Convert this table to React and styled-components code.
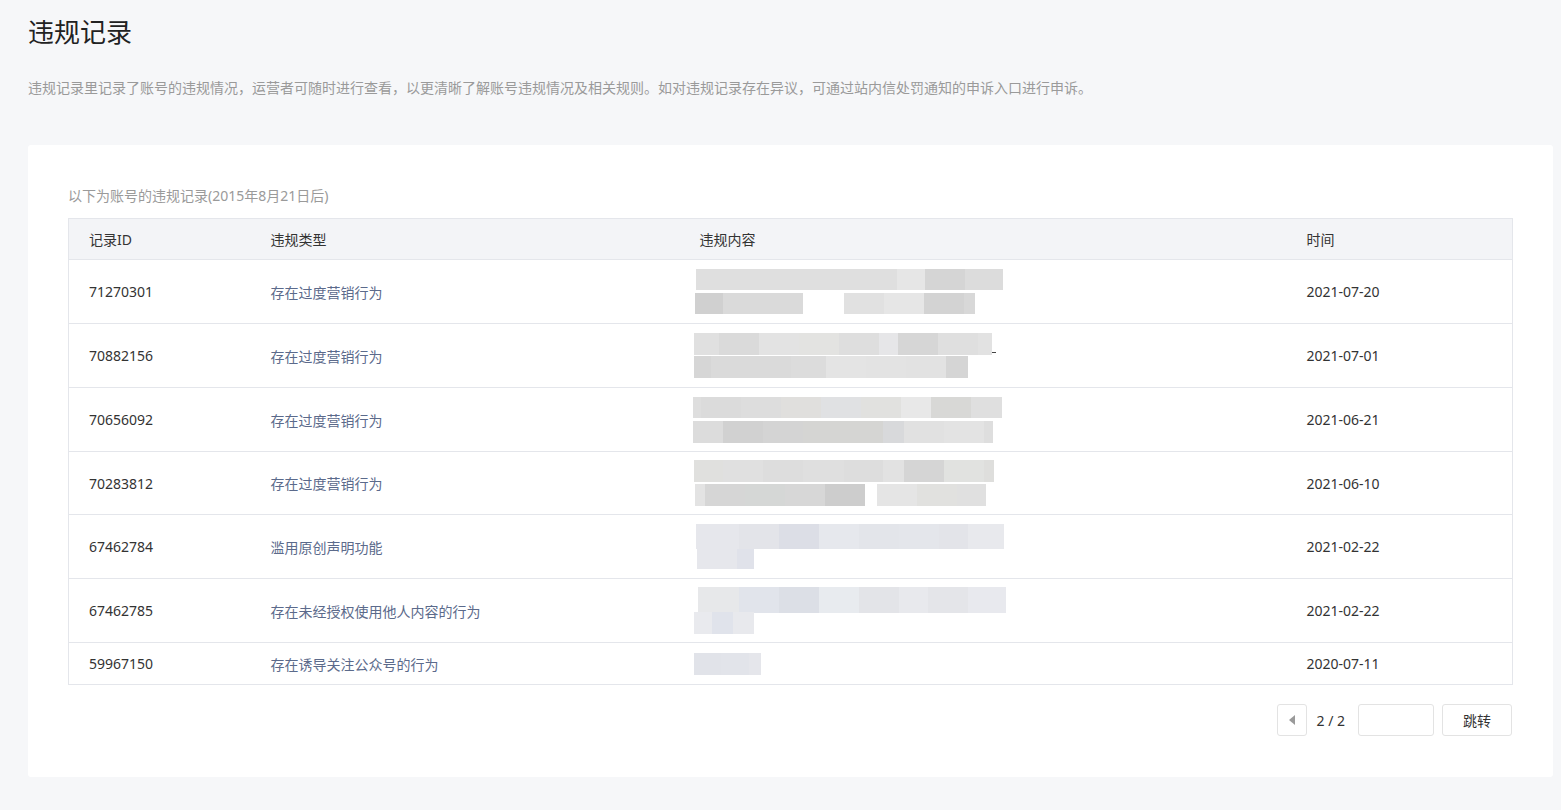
import React from 'react';
import styled, { createGlobalStyle } from 'styled-components';

/********** Global **********/
const GlobalStyle = createGlobalStyle`
  html, body {
    margin: 0;
    padding: 0;
    background: #f6f7f9;
  }
  body {
    font-family: "Noto Sans", "Noto Sans CJK SC", sans-serif;
    color: #333;
  }
`

/********** Styling **********/
const Page = styled.div`
  padding: 14px 8px 34px 28px;
  min-height: 761px;
  box-sizing: border-box;
`
const Title = styled.h2`
  margin: 0;
  font-size: 26px;
  line-height: 36px;
  font-weight: 400;
  color: #222;
`
const Desc = styled.p`
  margin: 28px 0 0;
  font-size: 14px;
  line-height: 20px;
  color: #9a9a9a;
`
const Card = styled.div`
  margin-top: 47px;
  background: #fff;
  border-radius: 3px;
  padding: 41px 40px 41px 40px;
`
const Caption = styled.div`
  font-size: 14px;
  line-height: 20px;
  color: #9a9a9a;
`
const Table = styled.table`
  margin-top: 12px;
  width: 100%;
  table-layout: fixed;
  border-collapse: collapse;
  border: 1px solid #e4e6eb;
  font-size: 14px;
`
const HeadRow = styled.tr`
  height: 41px;
  background: #f3f4f7;
  border-bottom: 1px solid #e4e6eb;
`
const Th = styled.th`
  text-align: left;
  font-weight: 400;
  color: #333;
  padding: 0 0 0 20px;
`
const Row = styled.tr`
  height: ${({ $h }) => $h}px;
  border-bottom: 1px solid #e4e6eb;
`
const Td = styled.td`
  padding: 0 0 0 ${({ $pl }) => ($pl ?? 20)}px;
  vertical-align: middle;
  color: ${({ $type }) => ($type ? '#5b6a8b' : '#333')};
`
const Mosaic = styled.div`
  display: flex;
  flex-direction: column;
`
const MosaicLine = styled.div`
  display: flex;
  align-items: flex-end;
  height: ${({ $h }) => $h}px;
  margin-left: ${({ $x }) => $x}px;
  margin-top: ${({ $gap }) => $gap}px;
`
const Block = styled.span`
  display: block;
  width: ${({ $w }) => $w}px;
  height: 100%;
  background: ${({ $c }) => $c};
`
const Dash = styled.span`
  display: block;
  width: 4px;
  height: 1px;
  margin-bottom: 2px;
  background: #444;
`
const Pager = styled.div`
  display: flex;
  justify-content: flex-end;
  align-items: center;
  margin-top: 19px;
  padding-right: 1px;
`
const PrevBtn = styled.button`
  width: 30px;
  height: 32px;
  border: 1px solid #e3e3e3;
  border-radius: 3px;
  background: #fff;
  display: flex;
  align-items: center;
  justify-content: center;
  padding: 0;
`
const Arrow = styled.span`
  width: 0;
  height: 0;
  border-top: 5px solid transparent;
  border-bottom: 5px solid transparent;
  border-right: 6px solid #9a9a9a;
`
const PageText = styled.span`
  margin: 0 13px 0 9px;
  font-size: 14px;
  color: #333;
`
const JumpInput = styled.input`
  width: 76px;
  height: 32px;
  box-sizing: border-box;
  border: 1px solid #e3e3e3;
  border-radius: 3px;
  outline: none;
`
const JumpBtn = styled.button`
  margin-left: 8px;
  width: 70px;
  height: 32px;
  border: 1px solid #e3e3e3;
  border-radius: 3px;
  background: #fff;
  font-family: "Noto Sans CJK SC", sans-serif;
  font-size: 14px;
  color: #333;
`

/********** Data **********/
const G = 'transparent';
const records = [
  {
    id: '71270301', type: '存在过度营销行为', time: '2021-07-20', h: 64,
    lines: [
      { x: 16, h: 21, gap: 0, b: [[201, '#dfdfdf'], [28, '#e6e6e6'], [40, '#d5d5d5'], [38, '#dcdcdc']] },
      { x: 15, h: 21, gap: 3, b: [[28, '#d0d0d0'], [80, '#dadada'], [41, G], [40, '#e1e1e1'], [40, '#e6e6e6'], [40, '#d3d3d3'], [11, '#d8d8d8']] },
    ],
  },
  {
    id: '70882156', type: '存在过度营销行为', time: '2021-07-01', h: 64,
    lines: [
      { x: 14, h: 22, gap: 0, dash: true, b: [[25, '#e0e0e0'], [40, '#dadada'], [40, '#e3e3e3'], [40, '#e3e3e1'], [40, '#dedede'], [19, '#e6e6e8'], [40, '#d6d6d6'], [40, '#dfdfdf'], [14, '#e2e2e2']] },
      { x: 14, h: 22, gap: 1, b: [[17, '#d6d6d6'], [80, '#dadada'], [35, '#dcdcdc'], [40, '#e4e4e4'], [40, '#e3e3e3'], [40, '#e2e2e2'], [22, '#d5d5d5']] },
    ],
  },
  {
    id: '70656092', type: '存在过度营销行为', time: '2021-06-21', h: 64,
    lines: [
      { x: 13, h: 21, gap: 0, b: [[8, '#dedede'], [40, '#dbdbdb'], [40, '#dddddd'], [40, '#e0dfdd'], [40, '#e0e1e3'], [40, '#e1e1df'], [30, '#e8e8e8'], [40, '#d8d8d6'], [31, '#dfdfdf']] },
      { x: 13, h: 22, gap: 3, b: [[30, '#dcdcdc'], [40, '#d1d1d1'], [40, '#d4d4d4'], [80, '#d5d5d3'], [21, '#d8d9db'], [40, '#e1e1e1'], [40, '#e3e3e3'], [9, '#dedede']] },
    ],
  },
  {
    id: '70283812', type: '存在过度营销行为', time: '2021-06-10', h: 63,
    lines: [
      { x: 14, h: 22, gap: 0, b: [[29, '#e0e0de'], [40, '#e0e0e0'], [40, '#dddddd'], [41, '#dfdfdf'], [39, '#dddddd'], [21, '#e2e2e2'], [40, '#d5d5d5'], [40, '#e1e2e0'], [10, '#dededc']] },
      { x: 15, h: 22, gap: 2, b: [[10, '#e3e3e3'], [40, '#d6d6d6'], [40, '#d5d7d6'], [40, '#d7d7d7'], [40, '#cdcdcd'], [12, G], [40, '#e5e5e5'], [40, '#e1e1df'], [29, '#e0e0e0']] },
    ],
  },
  {
    id: '67462784', type: '滥用原创声明功能', time: '2021-02-22', h: 64,
    lines: [
      { x: 16, h: 25, gap: 0, b: [[43, '#e6e7ec'], [40, '#e3e4e9'], [40, '#dcdee6'], [40, '#e6e8ed'], [40, '#e3e5ea'], [40, '#e4e6eb'], [29, '#e3e4e9'], [36, '#e8e9ed']] },
      { x: 17, h: 20, gap: 0, b: [[40, '#e6e7ec'], [17, '#e0e2ea']] },
    ],
  },
  {
    id: '67462785', type: '存在未经授权使用他人内容的行为', time: '2021-02-22', h: 64,
    lines: [
      { x: 18, h: 26, gap: 0, b: [[41, '#e7e8ea'], [40, '#e1e4eb'], [40, '#dcdfe6'], [40, '#e8ebef'], [40, '#e3e4e8'], [29, '#e8e9ed'], [40, '#e4e5e9'], [38, '#e8e9ee']] },
      { x: 14, h: 22, gap: -1, b: [[18, '#e9eaee'], [21, '#e0e3eb'], [21, '#e8e9ed']] },
    ],
  },
  {
    id: '59967150', type: '存在诱导关注公众号的行为', time: '2020-07-11', h: 42,
    lines: [
      { x: 14, h: 22, gap: 0, b: [[27, '#e1e3e9'], [28, '#e2e4ea'], [12, '#e5e6eb']] },
    ],
  },
];

/********** Component **********/
const App = () => {
  return (
    <Page>
      <GlobalStyle />
      <Title>违规记录</Title>
      <Desc>违规记录里记录了账号的违规情况，运营者可随时进行查看，以更清晰了解账号违规情况及相关规则。如对违规记录存在异议，可通过站内信处罚通知的申诉入口进行申诉。</Desc>
      <Card>
        <Caption>以下为账号的违规记录(2015年8月21日后)</Caption>
        <Table>
          <colgroup>
            <col style={{ width: 182 }} />
            <col style={{ width: 429 }} />
            <col style={{ width: 607 }} />
            <col />
          </colgroup>
          <thead>
            <HeadRow>
              <Th>记录ID</Th>
              <Th>违规类型</Th>
              <Th>违规内容</Th>
              <Th>时间</Th>
            </HeadRow>
          </thead>
          <tbody>
            {records.map((r) => (
              <Row key={r.id} $h={r.h}>
                <Td>{r.id}</Td>
                <Td $type>{r.type}</Td>
                <Td $pl={0}>
                  <Mosaic>
                    {r.lines.map((l, i) => (
                      <MosaicLine key={i} $x={l.x} $h={l.h} $gap={l.gap}>
                        {l.b.map(([w, c], j) => (
                          <Block key={j} $w={w} $c={c} />
                        ))}
                        {l.dash && <Dash />}
                      </MosaicLine>
                    ))}
                  </Mosaic>
                </Td>
                <Td>{r.time}</Td>
              </Row>
            ))}
          </tbody>
        </Table>
        <Pager>
          <PrevBtn><Arrow /></PrevBtn>
          <PageText>2 / 2</PageText>
          <JumpInput />
          <JumpBtn>跳转</JumpBtn>
        </Pager>
      </Card>
    </Page>
  )
}

export default App
